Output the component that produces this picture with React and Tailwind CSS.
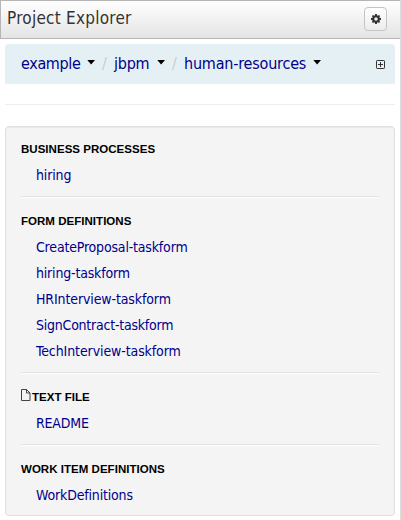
const sections = [
  { title: "BUSINESS PROCESSES", items: [["hiring", "tracking-[-0.15px]"]] },
  {
    title: "FORM DEFINITIONS",
    items: [
      ["CreateProposal-taskform", "tracking-[-0.18px]"],
      ["hiring-taskform", "tracking-[-0.18px]"],
      ["HRInterview-taskform", "tracking-[-0.12px]"],
      ["SignContract-taskform", "tracking-[-0.23px]"],
      ["TechInterview-taskform", "tracking-[-0.1px]"],
    ],
  },
  { title: "TEXT FILE", icon: true, items: [["README", "tracking-[-0.2px]"]] },
  { title: "WORK ITEM DEFINITIONS", items: [["WorkDefinitions", "tracking-[-0.17px]"]] },
];

function Caret() {
  return (
    <svg className="mt-4 h-[5px] w-2 shrink-0" viewBox="0 0 8 5" fill="#000">
      <path d="M.3 0h7.700L4.150 4.600z" />
    </svg>
  );
}

function Gear() {
  return (
    <svg className="h-[10px] w-[10px]" viewBox="0 0 10 10" fill="#333">
      <path
        fillRule="evenodd"
        d="M4.100 0h1.800l.3 1.400.6.3L8 .9 9.100 2l-.8 1.200.3.6 1.400.3v1.800l-1.400.3-.3.6L9.100 8 8 9.100l-1.200-.8-.6.3L5.900 10H4.100l-.3-1.400-.6-.3L2 9.100.9 8l.8-1.200-.3-.6L0 5.900V4.100l1.400-.3.3-.6L.9 2 2 .9l1.200.8.6-.3zM5 3.300a1.700 1.700 0 1 0 0 3.400 1.700 1.700 0 0 0 0-3.400z"
      />
    </svg>
  );
}

function PageIcon() {
  return (
    <svg className="-mt-[7px] mr-px h-3 w-[10px] shrink-0" viewBox="0 0 10 12" fill="none" stroke="#444">
      <path d="M.5.5H5.500L9 4v7.500H.5zM5.500.5V4H9" />
    </svg>
  );
}

export default function App() {
  return (
    <div className="h-[520px] w-[401px] overflow-hidden border-r border-[#ddd] bg-white font-['DejaVu_Sans_Condensed','DejaVu_Sans',sans-serif] [font-stretch:condensed]">
      <header className="flex h-[39px] items-center justify-between border-y border-l border-[#b5b5b5] bg-linear-to-b from-white to-[#e4e4e4] pr-[13px] pl-[6px]">
        <h1 className="-mt-[3px] text-[17px] leading-5 tracking-[0.24px] whitespace-nowrap text-[#333]">Project Explorer</h1>
        <button className="-mt-px flex h-6 w-[23px] items-center justify-center rounded-[4px] border border-[#c4c4c4] bg-linear-to-b from-white to-[#ececec]">
          <Gear />
        </button>
      </header>

      <nav className="mt-[5px] ml-[5px] flex h-10 w-[390px] rounded-t-[4px] bg-[#e5f0f5] pl-4 text-[16px] leading-[39px] whitespace-nowrap text-[#00008b]">
        <span className="w-[66px] tracking-[-0.35px]">example</span>
        <Caret />
        <span className="w-[19px] pl-[7px] text-[#ccc]">/</span>
        <span className="w-[43px] tracking-[-0.25px]">jbpm</span>
        <Caret />
        <span className="w-[19px] pl-[7px] text-[#ccc]">/</span>
        <span className="w-[129px] tracking-[-0.2px]">human-resources</span>
        <Caret />
        <svg className="mt-4 mr-[10px] ml-auto h-[9px] w-[9px]" viewBox="0 0 9 9" fill="none" stroke="#333">
          <rect x=".5" y=".5" width="8" height="8" rx=".7" />
          <path d="M2 4.500h5M4.500 2v5" />
        </svg>
      </nav>

      <hr className="mt-5 ml-[5px] w-[390px] border-[#eee]" />

      <main className="mt-[21px] ml-[5px] h-[390px] w-[390px] rounded-[4px] border border-[#e0e0e0] bg-[#f4f4f4] px-[15px] pt-[13px] shadow-[inset_0_1px_1px_rgba(0,0,0,0.05)]">
        {sections.map((s, i) => (
          <section key={s.title}>
            {i > 0 && <div className="mt-[8px] mb-[14px] h-[2px] w-[358px] border-t border-[#e0e0e0] bg-white" />}
            <h2 className="flex h-5 items-center font-['Liberation_Sans',Arial,sans-serif] text-[11.5px] font-bold tracking-[0.03px] whitespace-nowrap text-black">
              {s.icon && <PageIcon />}
              <span>{s.title}</span>
            </h2>
            <ul className="pt-[2px] pl-[15px] text-[14px] leading-[26px] text-[#00008b]">
              {s.items.map(([name, tracking]) => (
                <li key={name} className="h-[26px]">
                  <span className={tracking}>{name}</span>
                </li>
              ))}
            </ul>
          </section>
        ))}
      </main>
    </div>
  );
}
